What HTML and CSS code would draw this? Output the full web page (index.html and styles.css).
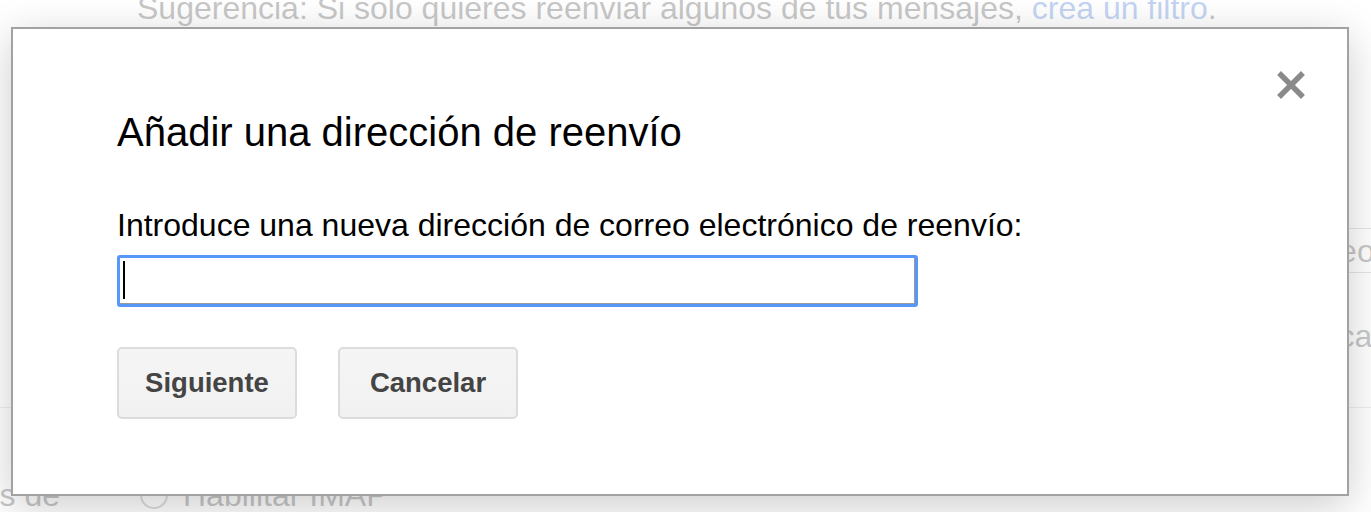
FILE: index.html
```html
<!DOCTYPE html>
<html lang="es">

<head>
    <meta charset="UTF-8">
    <meta name="viewport" content="width=device-width, initial-scale=1.0">
    <title>Añadir una dirección de reenvío</title>
    <link rel="stylesheet" href="styles.css">
</head>

<body>

    <div class="page">
        <p class="hint">Sugerencia: Si solo quieres reenviar algunos de tus mensajes, <a href="">crea un filtro</a>.</p>

        <div class="fwd-row">
            <div class="fwd-select">correo</div>
        </div>

        <div class="note-row">
            <span>busca</span>
        </div>

        <div class="imap-row">
            <div class="imap-label"><span>Acceso a través de</span></div>
            <span class="radio"></span>
            <span class="imap-text">Habilitar IMAP</span>
        </div>
    </div>

    <div class="mask"></div>

    <div class="modal">
        <button class="modal-close" title="Cerrar">
            <svg width="28" height="28" viewBox="0 0 28 28">
                <path d="M4 4 L24 24 M24 4 L4 24" stroke="#8a8a8a" stroke-width="5.5" stroke-linecap="square" />
            </svg>
        </button>

        <h1 class="modal-title">Añadir una dirección de reenvío</h1>

        <p class="modal-label">Introduce una nueva dirección de correo electrónico de reenvío:</p>
        <div class="modal-input"><span class="caret"></span></div>

        <div class="modal-buttons">
            <button class="btn">Siguiente</button>
            <button class="btn">Cancelar</button>
        </div>
    </div>

</body>

</html>
```

FILE: styles.css
```css
html,
body {
    margin: 0;
    padding: 0;
    width: 100%;
    height: 100%;
    overflow: hidden;
    background: #fff;
    font-family: Arial, "Liberation Sans", sans-serif;
}

/* page behind the dialog */
.page{
    color:#222;
}
.hint{
    margin: -10px 0 0 137px;
    font-size: 32px;
    line-height: 36px;
    white-space: nowrap;
}
.hint a{
    color:#15c;
    text-decoration: none;
}
.fwd-row{
    margin-top: 202px;
    padding-left: 1272px;
}
.fwd-select{
    height: 43px;
    padding: 0 12px;
    border-top: 1px solid #999;
    border-bottom: 1px solid #999;
    font-size: 32px;
    line-height: 44px;
    white-space: nowrap;
}
.note-row{
    padding: 45px 0 0 1287px;
    height: 89px;
    font-size: 32px;
    line-height: 36px;
    white-space: nowrap;
    border-bottom: 1px solid #bbb;
}
.imap-row{
    display: flex;
    align-items: center;
    margin-top: 69px;
    font-size: 32px;
    line-height: 36px;
    white-space: nowrap;
}
.imap-label{
    width: 60px;
    display: flex;
    justify-content: flex-end;
}
.radio{
    width: 24px;
    height: 24px;
    border: 2px solid #777;
    border-radius: 50%;
    margin-left: 80px;
}
.imap-text{
    margin-left: 15px;
}

.mask{
    position: absolute;
    top: 0;
    left: 0;
    right: 0;
    bottom: 0;
    background: rgba(255,255,255,0.75);
}

/* dialog */
.modal{
    position: absolute;
    top: 27px;
    left: 11px;
    width: 1338px;
    height: 469px;
    box-sizing: border-box;
    background: #fff;
    border: 2.5px solid #a2a2a2;
    box-shadow: 0 10px 40px rgba(0,0,0,0.2);
    padding: 83px 0 0 104px;
}
.modal-close{
    position: absolute;
    top: 42px;
    right: 42px;
    width: 28px;
    height: 28px;
    padding: 0;
    border: none;
    background: none;
    filter: blur(0.5px);
}
.modal-close svg{
    display: block;
}
.modal-title{
    margin: 0;
    font-size: 40px;
    font-weight: normal;
    line-height: 40px;
    color: #000;
}
.modal-label{
    margin: 57px 0 0 0;
    font-size: 32px;
    line-height: 32px;
    color: #000;
}
.modal-input{
    margin-top: 14px;
    width: 801px;
    height: 52px;
    box-sizing: border-box;
    border: 3px solid #5897fa;
    border-radius: 3px;
    box-shadow: inset -1px -1px 0 #9a9a9a;
    padding: 3px 0 0 3px;
}
.caret{
    display: block;
    width: 2px;
    height: 38px;
    background: #000;
}
.modal-buttons{
    display: flex;
    gap: 41px;
    margin-top: 40px;
}
.btn{
    min-width: 180px;
    height: 72px;
    box-sizing: border-box;
    border: 2.5px solid #dcdcdc;
    border-radius: 5px;
    background: linear-gradient(#f5f5f5, #f1f1f1);
    color: #444;
    font-family: Arial, "Liberation Sans", sans-serif;
    font-size: 27.5px;
    font-weight: bold;
    padding: 0 20px;
}
```
